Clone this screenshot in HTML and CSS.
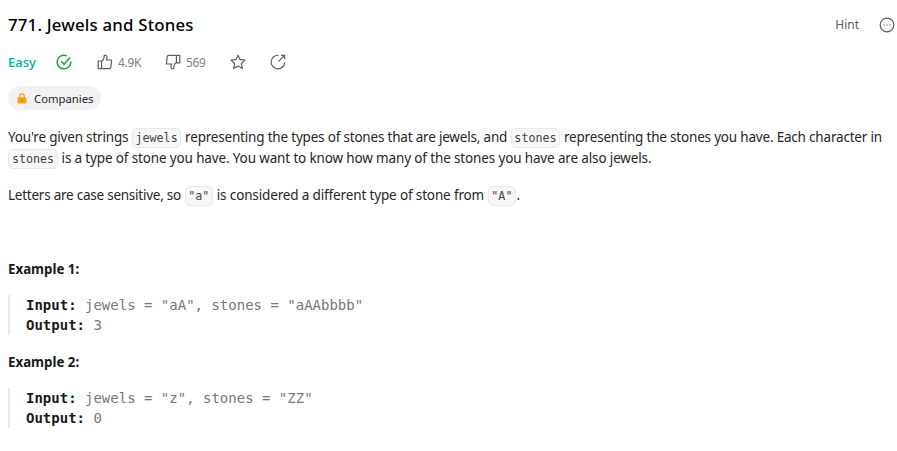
FILE: index.html
```
<!DOCTYPE html>
<html lang="en">
<head>
<meta charset="utf-8">
<title>771. Jewels and Stones</title>
<link rel="stylesheet" href="styles.css">
</head>
<body>
<header class="head">
  <h1 class="title">771. Jewels and Stones</h1>
  <div class="tools">
    <span class="hint">Hint</span>
    <svg class="icon" viewBox="0 0 16 16"><circle cx="8" cy="8" r="6.8"/><path d="M4.5 8h1.2M7.4 8h1.2M10.3 8h1.2"/></svg>
  </div>
</header>
<div class="meta">
  <span class="easy">Easy</span>
  <svg class="icon done" viewBox="0 0 16 16"><path d="M10.7 1.8A6.8 6.8 0 1 0 14.8 7.6M5.1 7.3l3 2.9 6-6.6"/></svg>
  <svg class="icon up" viewBox="0 0 16 16"><path d="M1.2 7h3.4v7.6H1.2zM4.6 7.2c1.6-.7 2.6-2.6 2.6-5.6 2-.7 3.2.6 2.8 2.4L9.4 6h5.2l-.8 7.3q-.2 1.3-1.5 1.3H4.6"/></svg>
  <span class="count likes">4.9K</span>
  <svg class="icon down" viewBox="0 0 16 16"><path d="M14.8 1.4h-3.4v7.5h3.4zM11.4 8.8c-1.6.7-2.6 2.6-2.6 5.6-2 .7-3.2-.6-2.8-2.4l.6-2H1.4l.8-7.3q.2-1.3 1.5-1.3h7.7"/></svg>
  <span class="count dislikes">569</span>
  <svg class="icon star" viewBox="0 0 16 16"><path d="M8 1.2l2 4.2 4.9.7-3.5 3.4.9 5L8 12.1l-4.3 2.4.9-5L1.1 6.1 6 5.4z"/></svg>
  <svg class="icon" viewBox="0 0 16 16"><path d="M8.6 1.3A6.8 6.8 0 1 0 14.7 8.6M8.3 7.7L14.3 1.7M11 1.4h3.6v3.6"/></svg>
</div>
<div class="chip">
  <svg class="lock" viewBox="0 0 10 11"><path class="shackle" d="M2.7 5V3.2a2.3 2.3 0 0 1 4.6 0V5"/><rect x=".5" y="4.2" width="9" height="6.3" rx="1.2"/><circle cx="5" cy="7.3" r="1"/></svg>
  <span>Companies</span>
</div>
<main class="body">
  <p>You're given strings <code>jewels</code> representing the types of stones that are jewels, and <code>stones</code> representing the stones you have. Each character in<br><code>stones</code> <span class="loose">is a type of stone you have. You want to know how many of the stones you have are also jewels.</span></p>
  <p><span class="tight">Letters are case sensitive, so</span> <code>"a"</code> <span class="loose">is considered a different type of stone from</span> <code>"A"</code>.</p>
  <h2 class="first">Example 1:</h2>
  <pre><strong>Input:</strong> jewels = "aA", stones = "aAAbbbb"
<strong>Output:</strong> 3</pre>
  <h2>Example 2:</h2>
  <pre><strong>Input:</strong> jewels = "z", stones = "ZZ"
<strong>Output:</strong> 0</pre>
</main>
</body>
</html>
```
FILE: styles.css
```
* { box-sizing: border-box; }
body { margin: 0; padding: 12px 10px 0 8px; background: #fff; color: #262626; font: 13.15px/21px "Noto Sans", sans-serif; white-space: nowrap; }
.head { display: flex; justify-content: space-between; align-items: center; height: 25px; }
.title { margin: 0; font-size: 16.8px; letter-spacing: .2px; font-weight: 500; color: #000; }
.tools { display: flex; align-items: center; gap: 20px; }
.hint { font-size: 12px; color: #5c5c5c; }
.icon { display: block; width: 16px; height: 16px; fill: none; stroke: #5c5c5c; stroke-width: 1.2; stroke-linejoin: round; flex: none; }
.tools .icon { margin-right: -8px; }
.meta { display: flex; align-items: center; height: 20px; margin-top: 15px; }
.easy { width: 48px; color: #00a99a; font-weight: 500; font-size: 13px; }
.done { stroke: #15a83b; stroke-width: 1.5; }
.up { margin-left: 25px; }
.count { margin-left: 5px; color: #808080; font-size: 12px; letter-spacing: -.35px; }
.likes { width: 47px; }
.dislikes { width: 44px; }
.star { margin-right: 24px; }
.chip { display: flex; align-items: center; width: 93px; height: 24px; margin-top: 14px; padding-left: 9px; gap: 7px; border-radius: 12px; background: #f1f2f4; font-size: 11.3px; }
.lock { width: 10px; height: 11px; fill: #ffa116; }
.lock .shackle { fill: none; stroke: #ffa116; stroke-width: 1.3; }
.lock circle { fill: #d87800; }
.body { padding-top: 17px; }
p { margin: 0 0 16px; font-size: 13.5px; letter-spacing: -.195px; }
.loose { letter-spacing: -.145px; }
.tight { letter-spacing: -.24px; }
code { display: inline-block; height: 20px; padding: 0 2.6px; margin: -2px .5px 0 .3px; border: 1px solid #e8e8e8; border-radius: 5px; background: #f7f7f7; color: #444; font: 11.7px/18px "DejaVu Sans Mono", monospace; letter-spacing: 0; }
h2 { margin: 0; font-size: 13.3px; line-height: 21px; font-weight: 700; color: #1a1a1a; }
h2.first { margin-top: 53px; }
pre { margin: 15px 0 17px; padding-left: 16px; border-left: 2px solid #e8e8e8; color: #777; font: 14px/20px "DejaVu Sans Mono", monospace; }
pre strong { color: #1a1a1a; }
```
